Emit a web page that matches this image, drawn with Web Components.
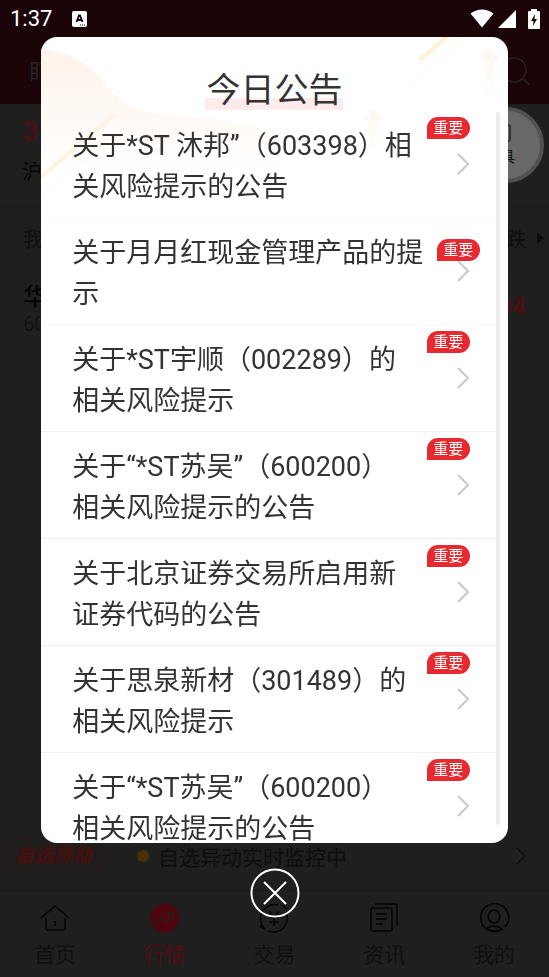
<!DOCTYPE html>
<html lang="zh-CN">
<head>
<meta charset="utf-8">
<title>今日公告</title>
<style>
html, body { margin: 0; height: 100%; background: #1f1f1f; overflow: hidden; }
body { font-family: Roboto, "Noto Sans CJK SC", sans-serif; text-spacing-trim: space-all; }
</style>
</head>
<body>
<notice-app></notice-app>
<script>
const define = (name, html) => customElements.define(name, class extends HTMLElement {
  connectedCallback() {
    if (this.shadowRoot) return;
    const root = this.attachShadow({ mode: 'open' });
    const t = document.createElement('template');
    t.innerHTML = html;
    root.append(t.content.cloneNode(true));
  }
});

define('status-bar', `
<style>
:host { display: flex; align-items: center; height: 37px; padding: 0 9px 0 10px; color: #fff; font-size: 22px; box-sizing: border-box; }
time { line-height: 38px; }
svg { display: block; flex: none; }
.kb { margin-left: 20px; }
.right { display: flex; align-items: center; margin-left: auto; gap: 4px; }
.bat { margin-left: 8px; }
</style>
<time>1:37</time>
<svg class="kb" width="15" height="16" viewBox="0 0 15 16"><rect width="15" height="16" rx="2" fill="#fff"/><path d="M4.500 11 7 4.500h1L10.500 11M5.500 9h4" fill="none" stroke="#1c0508" stroke-width="1.800"/><path d="M8 14h6" stroke="#1c0508" stroke-dasharray="1 1"/></svg>
<div class="right">
<svg width="24" height="19" viewBox="0 0 24 19"><path d="M.5 4.500Q12-3.500 23.500 4.500L12 18.500Z" fill="#fff"/></svg>
<svg width="18" height="18" viewBox="0 0 18 18"><path d="M18 0v18H0Z" fill="#fff"/></svg>
<svg class="bat" width="12" height="20" viewBox="0 0 12 20"><path d="M3 2V0h6v2h2q1 0 1 1v16q0 1-1 1H1q-1 0-1-1V3q0-1 1-1Z" fill="#fff"/><path d="M7 5 3 12h2.500L5 17l4-7H6.500Z" fill="#1c0508"/></svg>
</div>`);

define('market-page', `
<style>
:host { display: flex; flex-direction: column; height: 100%; background: #1f1f1f; color: #0e0e0e; }
header { background: #1c0508; height: 104px; flex: none; color: #232323; }
.nav { display: flex; justify-content: space-between; align-items: center; height: 67px; padding: 0 18px 0 29px; font-size: 24px; }
.nav svg { display: block; }
.index { height: 96px; padding: 8px 22px 0; box-sizing: border-box; border-bottom: 1px solid #1d1d1d; }
.num { font-size: 28px; font-weight: 500; line-height: 40px; color: #4d0e11; }
.name { font-size: 20px; line-height: 40px; color: #050505; }
.head { display: flex; align-items: center; justify-content: space-between; height: 66px; margin-top: 5px; padding: 0 5px 0 23px; font-size: 20px; background: #1e1e1e; }
.head span:last-child { display: flex; align-items: center; gap: 11px; }
.stock { display: flex; align-items: center; justify-content: space-between; height: 76px; padding: 0 23px; border-bottom: 1px solid #1d1d1d; }
.stock b { display: block; font-weight: 500; font-size: 24px; line-height: 30px; color: #050505; }
.stock small { display: block; font-size: 20px; line-height: 24px; color: #131313; }
.stock strong { font-size: 25px; line-height: 36px; padding-bottom: 4px; font-weight: 500; color: #4d0e11; }
.fill { flex: 1; }
.watch { display: flex; align-items: center; height: 68px; padding: 0 22px 2px 0; box-sizing: border-box; font-size: 21px; border-bottom: 1px solid #1b1b1b; }
.watch b { width: 104px; padding-left: 15px; box-sizing: border-box; line-height: 36px; font-size: 19px; font-style: italic; font-weight: 900; color: #44120e; background: #211d1d; }
.watch i { width: 12px; height: 12px; border-radius: 50%; background: #4a3205; margin: 0 9px 0 33px; }
.watch svg { margin-left: auto; }
</style>
<header><status-bar></status-bar>
<div class="nav"><span>盯</span><svg width="32" height="32" viewBox="0 0 32 32" fill="none" stroke="#242424" stroke-width="1.500"><circle cx="15" cy="15" r="12"/><path d="m24 24 6 6"/></svg></div></header>
<section class="index"><div class="num">39</div><div class="name">沪</div></section>
<div class="head"><span>我</span><span>跌<svg width="7" height="12"><path d="M0 0 7 6 0 12Z" fill="#0c0c0c"/></svg></span></div>
<section class="stock"><div><b>华</b><small>60</small></div><strong>04</strong></section>
<div class="fill"></div>
<div class="watch"><b>自选异动</b><i></i><span>自选异动实时监控中</span><svg width="12" height="20" fill="none" stroke="#0c0c0c" stroke-width="1.500"><path d="m2 2 8 8-8 8"/></svg></div>
<tab-bar></tab-bar>`);

define('tab-bar', `
<style>
:host { display: block; }
nav { display: grid; grid-template-columns: repeat(5, 1fr); height: 86px; }
a { display: flex; flex-direction: column; align-items: center; padding-top: 11px; gap: 5px; color: #101010; font-size: 21px; line-height: 32px; text-decoration: none; }
a.on { color: #500d12; }
svg { width: 32px; height: 32px; fill: none; stroke: #050505; stroke-width: 1.500; }
</style>
<nav>
<a href="#home"><svg viewBox="0 0 32 32"><path d="M2 16 16 4l14 12M7 16v10q0 2 2 2h15q2 0 2-2V16M16 19v5"/></svg>首页</a>
<a href="#quotes" class="on"><svg viewBox="0 0 32 32"><circle cx="16" cy="16" r="14.500" fill="#4f060e" stroke="none"/><path d="m5 22 7-7 5 5 8-8M17 11h7v7" stroke="#252020"/></svg>行情</a>
<a href="#trade"><svg viewBox="0 0 32 32"><path d="M6 26A14 14 0 0 1 20 3M10 29A14 14 0 0 0 28 10M2 24l5 3M24 3l5 4M11 9l5 6 5-6M11 15h10M11 20h10M16 15v9"/></svg>交易</a>
<a href="#news"><svg viewBox="0 0 32 32"><rect x="3" y="6" width="21" height="23" rx="2"/><path d="M7 2h20q2 0 2 2v20M8 12h11M8 17h11M8 22h7"/></svg>资讯</a>
<a href="#me"><svg viewBox="0 0 32 32"><path d="M27 25A14 14 0 1 0 22 28.500"/><rect x="10.500" y="8" width="11" height="13" rx="5.500"/><path d="M8 27q8-6 16 0-8 4-16 0Z"/></svg>我的</a>
</nav>`);

define('tool-bubble', `
<style>
:host { position: absolute; right: 5px; top: 107px; width: 76px; height: 76px; padding-right: 12px; border-radius: 50%; border: 4px solid #515151; box-sizing: border-box; background: #686868; color: #111; display: flex; flex-direction: column; align-items: center; justify-content: center; gap: 4px; font-size: 15px; line-height: 20px; }
svg { display: block; }
</style>
<svg width="24" height="20" fill="none" stroke="#222" stroke-width="1.500"><rect x="3" y="2" width="19" height="16" rx="2"/></svg><span><slot></slot></span>`);

define('notice-item', `
<style>
:host { display: block; border-bottom: 1px solid #f0f0f0; }
:host([faint]) { border-color: #f9f9f9; }
a { position: relative; display: block; padding: 15px 0 9px 31px; color: #333; font-size: 27px; line-height: 41px; text-decoration: none; white-space: nowrap; }
.badge { position: absolute; right: 26px; top: 6px; width: 43px; height: 22px; border-radius: 11px 11px 11px 0; background: #e62a30; color: #fff; font-size: 15px; line-height: 23px; text-align: center; }
:host([wide]) .badge { right: 16px; top: 21px; }
svg { position: absolute; right: 26px; top: 41px; }
::slotted(span) { display: block; }
</style>
<a href="#notice"><slot></slot><svg width="14" height="24" fill="none" stroke="#c9c9c9" stroke-width="2"><path d="m2 2 10 10L2 22"/></svg><span class="badge">重要</span></a>`);

define('notice-dialog', `
<style>
:host { position: fixed; inset: 0; display: flex; flex-direction: column; align-items: center; padding: 37px 0 59px; }
section { position: relative; flex: 1; min-height: 0; width: 85%; border-radius: 16px; background: #fff; overflow: hidden; display: flex; flex-direction: column; }
.art { position: absolute; left: 0; top: 0; }
.art.r { left: auto; right: 0; }
h1 { position: relative; margin: 32px auto 0; padding: 0 1px; color: #333; font-size: 34px; line-height: 42px; font-weight: 400; background: linear-gradient(#ffebec, #ffebec) 0 29px / 100% 12px no-repeat; }
.list { position: relative; flex: 1; min-height: 0; overflow: hidden; margin-right: 12px; }
.bar { position: absolute; right: 8px; top: 75px; bottom: 18px; width: 4px; border-radius: 2px; background: #ececec; }
button { flex: none; margin-top: 25px; width: 50px; height: 50px; padding: 0; border: 0; background: none; }
button svg { display: block; }
</style>
<section role="dialog" aria-labelledby="t">
<svg class="art" width="240" height="170" viewBox="0 0 240 170"><defs><linearGradient id="g" x2="0" y2="1"><stop stop-color="#fff3ea"/><stop offset=".8" stop-color="#fff"/></linearGradient></defs><path d="M0 12Q40 17 60 42 83 76 130 78 190 80 240 100V170H0Z" fill="url(#g)"/><path d="M0 140 73 78" stroke="#fff3e0" stroke-width="4" stroke-linecap="round"/><path d="M0 158 60 108" stroke="#fff8ee"/></svg>
<svg class="art r" width="150" height="120" viewBox="0 0 150 120"><defs><linearGradient id="h" x2="0" y2="1"><stop stop-color="#fff5ee"/><stop offset="1" stop-color="#fff"/></linearGradient></defs><path d="M63 22 90-2" stroke="#fff0d4" stroke-width="4" stroke-linecap="round"/><path d="M45 54 108-1" stroke="#fff6e8"/><path d="m131 11 11 12h-6v40h-9V23h-7Z" fill="url(#h)"/><path d="m15 72 10 11h-6v32h-8V83H5Z" fill="url(#h)"/></svg>
<h1 id="t">今日公告</h1>
<div class="list"><slot></slot></div>
<div class="bar"></div>
</section>
<button type="button" aria-label="关闭"><svg width="50" height="50" fill="none" stroke="#fff" stroke-width="2"><circle cx="25" cy="25" r="23.500"/><path d="m14 14 22 22M36 14 14 36"/></svg></button>`);

define('notice-app', `
<style>:host { display: block; height: 100%; position: relative; }</style>
<market-page></market-page>
<tool-bubble>工具</tool-bubble>
<notice-dialog>
<notice-item faint><span>关于*ST 沐邦”（603398）相</span><span>关风险提示的公告</span></notice-item>
<notice-item faint wide><span>关于月月红现金管理产品的提</span><span>示</span></notice-item>
<notice-item><span>关于*ST宇顺（002289）的</span><span>相关风险提示</span></notice-item>
<notice-item><span>关于“*ST苏吴”（600200）</span><span>相关风险提示的公告</span></notice-item>
<notice-item><span>关于北京证券交易所启用新</span><span>证券代码的公告</span></notice-item>
<notice-item><span>关于思泉新材（301489）的</span><span>相关风险提示</span></notice-item>
<notice-item><span>关于“*ST苏吴”（600200）</span><span>相关风险提示的公告</span></notice-item>
</notice-dialog>`);
</script>
</body>
</html>
